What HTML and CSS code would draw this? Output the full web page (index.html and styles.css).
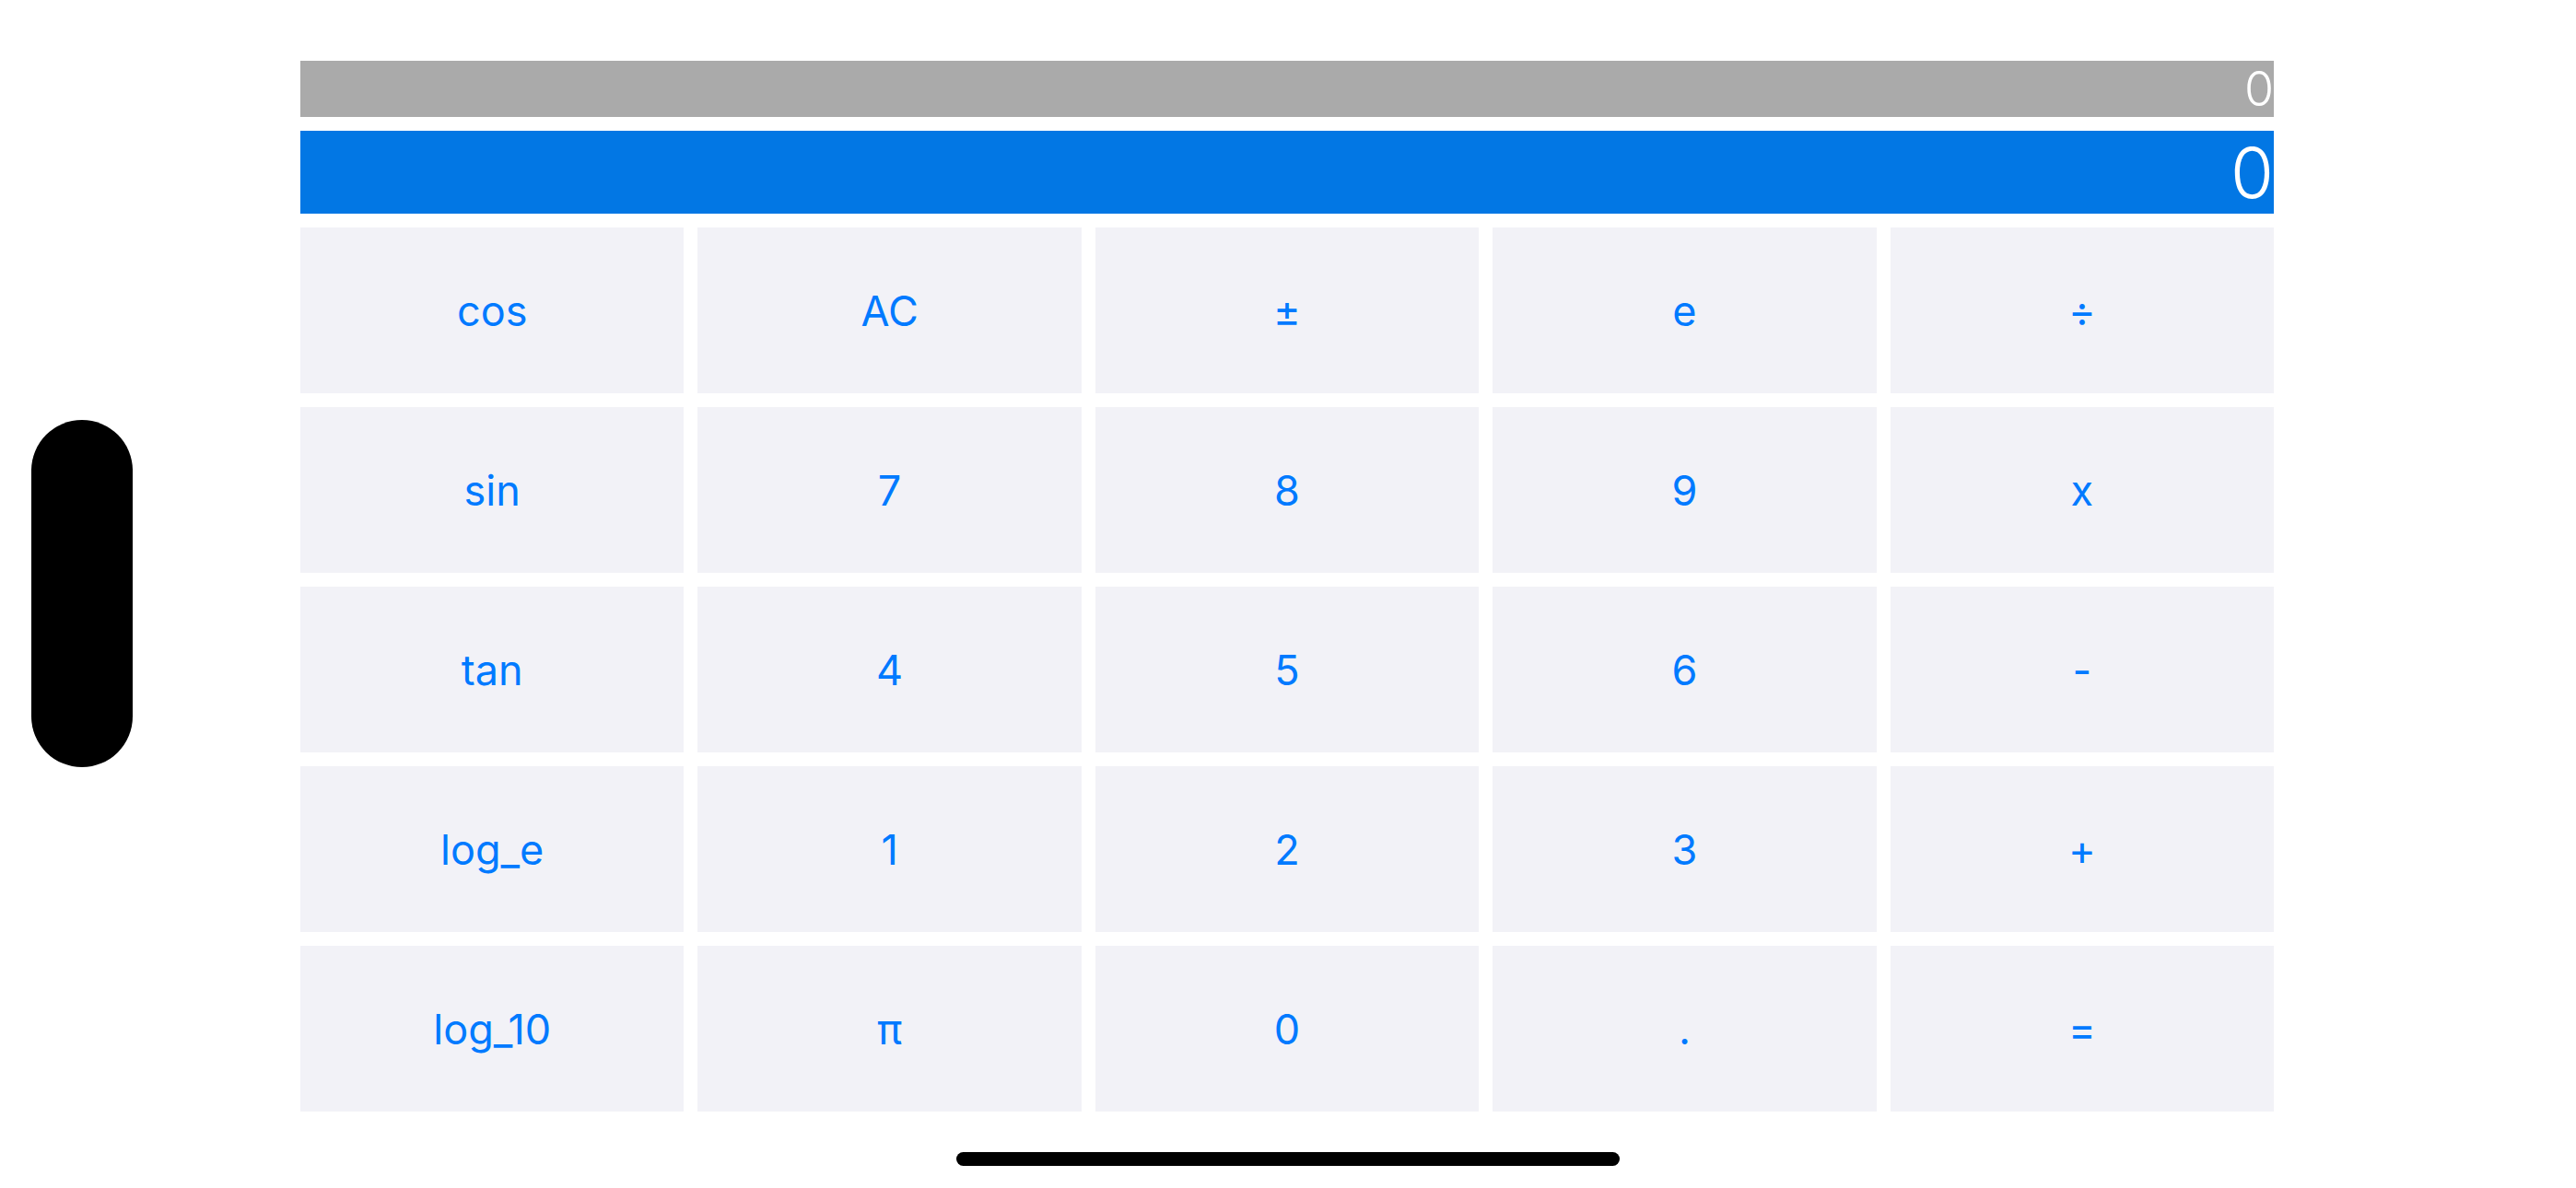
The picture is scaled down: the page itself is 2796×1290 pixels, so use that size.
FILE: index.html
```html
<!DOCTYPE html>
<html lang="en">
<head>
  <meta charset="UTF-8" />
  <meta name="viewport" content="width=device-width, initial-scale=1.0"/>
  <title>Calculator</title>
  <link rel="stylesheet" href="styles.css">
</head>
<body>
  <div class="island"></div>

  <div class="calculator">
    <div class="history">0</div>
    <div class="display">0</div>

    <div class="keys">
      <button class="key">cos</button>
      <button class="key">AC</button>
      <button class="key">±</button>
      <button class="key">e</button>
      <button class="key">÷</button>

      <button class="key">sin</button>
      <button class="key">7</button>
      <button class="key">8</button>
      <button class="key">9</button>
      <button class="key">x</button>

      <button class="key">tan</button>
      <button class="key">4</button>
      <button class="key">5</button>
      <button class="key">6</button>
      <button class="key">-</button>

      <button class="key">log_e</button>
      <button class="key">1</button>
      <button class="key">2</button>
      <button class="key">3</button>
      <button class="key">+</button>

      <button class="key">log_10</button>
      <button class="key">π</button>
      <button class="key">0</button>
      <button class="key">.</button>
      <button class="key">=</button>
    </div>
  </div>

  <div class="home-indicator"></div>
</body>
</html>
```

FILE: styles.css
```css
body {
  font-family: Inter, "Noto Sans", sans-serif;
  background-color: white;
  margin: 0;
  padding: 0;
  width: 2796px;
  height: 1290px;
  overflow: hidden;
  position: relative;
}

/* side camera pill (landscape) */
.island {
  position: absolute;
  left: 34px;
  top: 456px;
  width: 110px;
  height: 377px;
  border-radius: 55px;
  background-color: black;
}

.home-indicator {
  position: absolute;
  left: 1038px;
  top: 1251px;
  width: 720px;
  height: 15px;
  border-radius: 8px;
  background-color: black;
}

.calculator {
  width: 2142px;
  margin-left: 326px;
  padding-top: 66px;
  display: flex;
  flex-direction: column;
  gap: 15px;
}

.history {
  height: 61px;
  background-color: #aaaaaa;
  color: white;
  font-size: 52px;
  font-weight: 300;
  line-height: 61px;
  text-align: right;
}

.display {
  height: 90px;
  background-color: #0277e4;
  color: white;
  font-size: 76px;
  font-weight: 300;
  line-height: 90px;
  text-align: right;
}

.keys {
  display: grid;
  grid-template-columns: repeat(5, 1fr);
  grid-auto-rows: 180px;
  gap: 15px;
}

.key {
  background-color: #f2f2f7;
  color: #007aff;
  border: none;
  border-radius: 0;
  padding: 0;
  font-family: inherit;
  font-size: 45px;
  font-weight: 400;
  cursor: pointer;
}

.key:active {
  background-color: #dcdce3;
}
```
